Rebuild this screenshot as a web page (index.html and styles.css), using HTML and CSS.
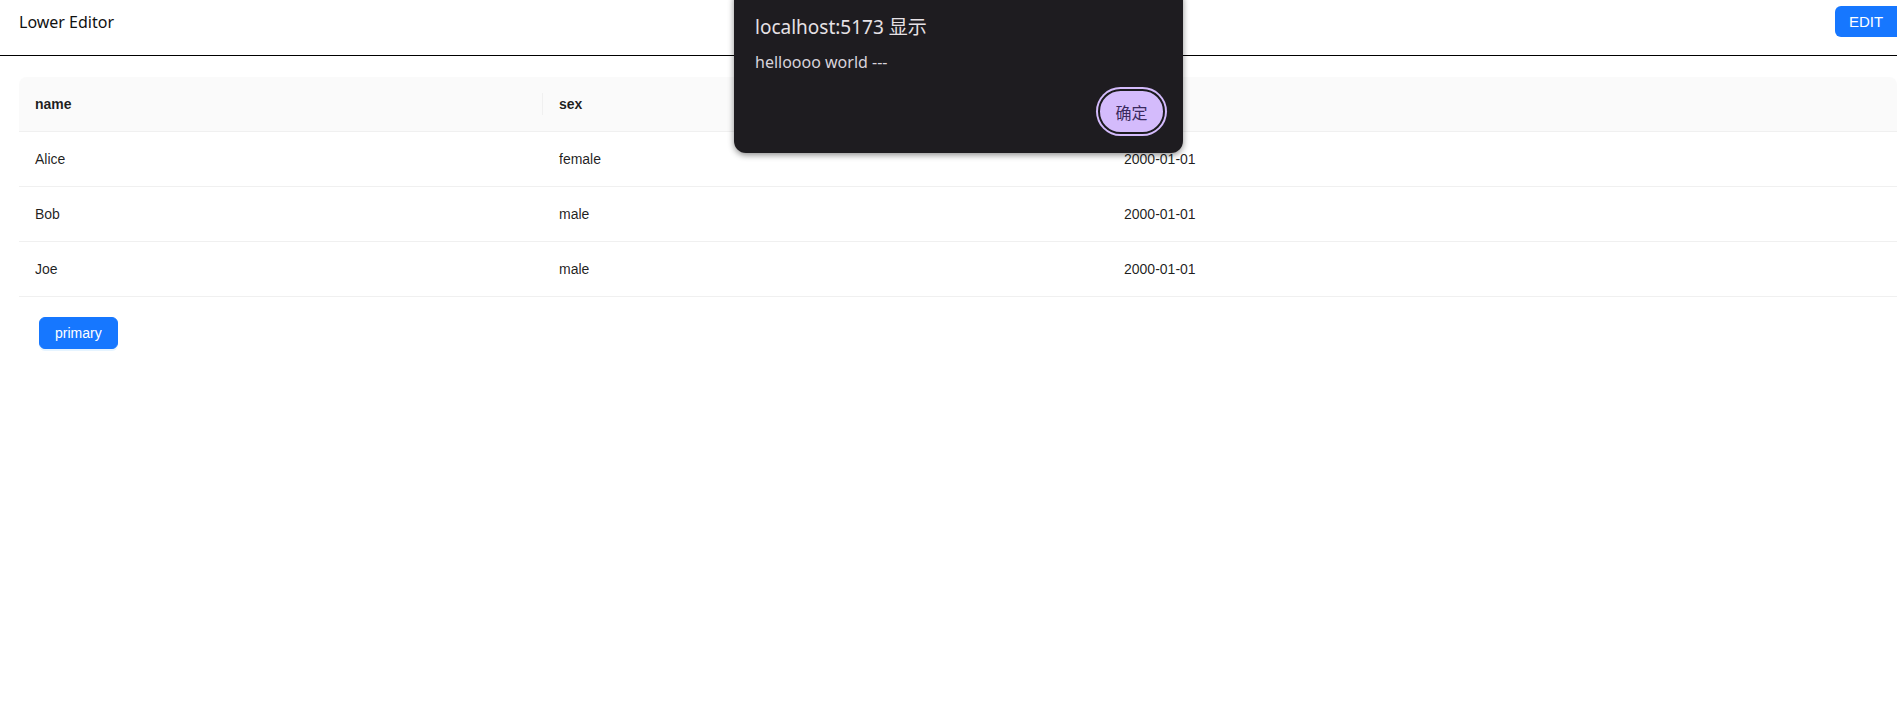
FILE: index.html
```html
<!DOCTYPE html>
<html lang="en">
<head>
<meta charset="utf-8">
<title>Lower Editor</title>
<link rel="stylesheet" href="styles.css">
</head>
<body>
<header class="topbar">
  <div class="brand">Lower Editor</div>
  <button class="edit-btn">EDIT</button>
</header>
<main class="content">
  <table class="grid">
    <colgroup>
      <col class="c1"><col class="c2"><col class="c3">
    </colgroup>
    <thead>
      <tr><th>name</th><th>sex</th><th></th></tr>
    </thead>
    <tbody>
      <tr><td>Alice</td><td>female</td><td>2000-01-01</td></tr>
      <tr><td>Bob</td><td>male</td><td>2000-01-01</td></tr>
      <tr><td>Joe</td><td>male</td><td>2000-01-01</td></tr>
    </tbody>
  </table>
  <div class="actions">
    <button class="primary-btn">primary</button>
  </div>
</main>
<div class="alert">
  <div class="alert-title">localhost:5173 显示</div>
  <div class="alert-msg">helloooo world ---</div>
  <div class="alert-foot">
    <button class="ok-btn">确定</button>
  </div>
</div>
</body>
</html>
```
FILE: styles.css
```css
html, body {
  margin: 0;
  padding: 0;
  background: #fff;
}
body {
  width: 1897px;
  height: 705px;
  overflow: hidden;
  position: relative;
  font-family: "Liberation Sans", Arial, sans-serif;
}
.topbar {
  display: flex;
  justify-content: space-between;
  align-items: flex-start;
  height: 55px;
  border-bottom: 1px solid #000;
  padding-left: 19px;
}
.brand {
  font-family: "Noto Sans", sans-serif;
  font-size: 16px;
  line-height: 24px;
  padding-top: 10px;
  color: #111;
}
.edit-btn {
  margin-top: 6px;
  width: 62px;
  height: 31px;
  border: none;
  border-radius: 6px 0 0 6px;
  background: #1677ff;
  color: #fff;
  font-family: "Liberation Sans", Arial, sans-serif;
  font-size: 15px;
  padding: 0;
}
.content {
  padding: 21px 0 0 19px;
}
.grid {
  width: 1878px;
  border-collapse: separate;
  border-spacing: 0;
  font-size: 14px;
  line-height: 22px;
  color: rgba(0, 0, 0, 0.88);
  table-layout: fixed;
}
.c1 { width: 524px; }
.c2 { width: 565px; }
.grid th {
  position: relative;
  background: #fafafa;
  font-weight: 700;
  text-align: left;
  padding: 16px;
  height: 22px;
  border-bottom: 1px solid #f0f0f0;
}
.grid th:first-child { border-top-left-radius: 8px; }
.grid th:last-child { border-top-right-radius: 8px; }
.grid th:not(:last-child)::before {
  content: "";
  position: absolute;
  right: 0;
  top: 50%;
  width: 1px;
  height: 22px;
  transform: translateY(-50%);
  background: #f0f0f0;
}
.grid td {
  padding: 16px;
  border-bottom: 1px solid #f0f0f0;
}
.actions {
  padding: 20px 0 0 20px;
}
.primary-btn {
  height: 32px;
  padding: 4px 15px;
  border: 1px solid #1677ff;
  border-radius: 6px;
  background: #1677ff;
  color: #fff;
  font-family: "Liberation Sans", Arial, sans-serif;
  font-size: 14px;
  line-height: 22px;
  box-shadow: 0 2px 0 rgba(5, 145, 255, 0.1);
}
.alert {
  position: absolute;
  left: 734px;
  top: -12px;
  width: 449px;
  height: 165px;
  box-sizing: border-box;
  padding: 26px 20px 0 21px;
  background: #1e1c20;
  border-radius: 12px;
  box-shadow: 0 2px 6px rgba(0, 0, 0, 0.45);
  font-family: "Noto Sans", "Noto Sans CJK SC", sans-serif;
  display: flex;
  flex-direction: column;
}
.alert-title {
  font-size: 19px;
  line-height: 26px;
  color: #e6e1e5;
}
.alert-msg {
  margin-top: 11px;
  font-size: 16px;
  line-height: 22px;
  color: #d8d3db;
}
.alert-foot {
  display: flex;
  justify-content: flex-end;
  margin-top: 16px;
  margin-right: -2px;
}
.ok-btn {
  width: 67px;
  height: 45px;
  border: 2px solid #1c1b1f;
  border-radius: 23px;
  background: #d4bbfc;
  box-shadow: 0 0 0 2px #d4bbfc;
  color: #3a2a5e;
  font-family: "Noto Sans CJK SC", sans-serif;
  font-size: 16px;
  padding: 0;
}
```
